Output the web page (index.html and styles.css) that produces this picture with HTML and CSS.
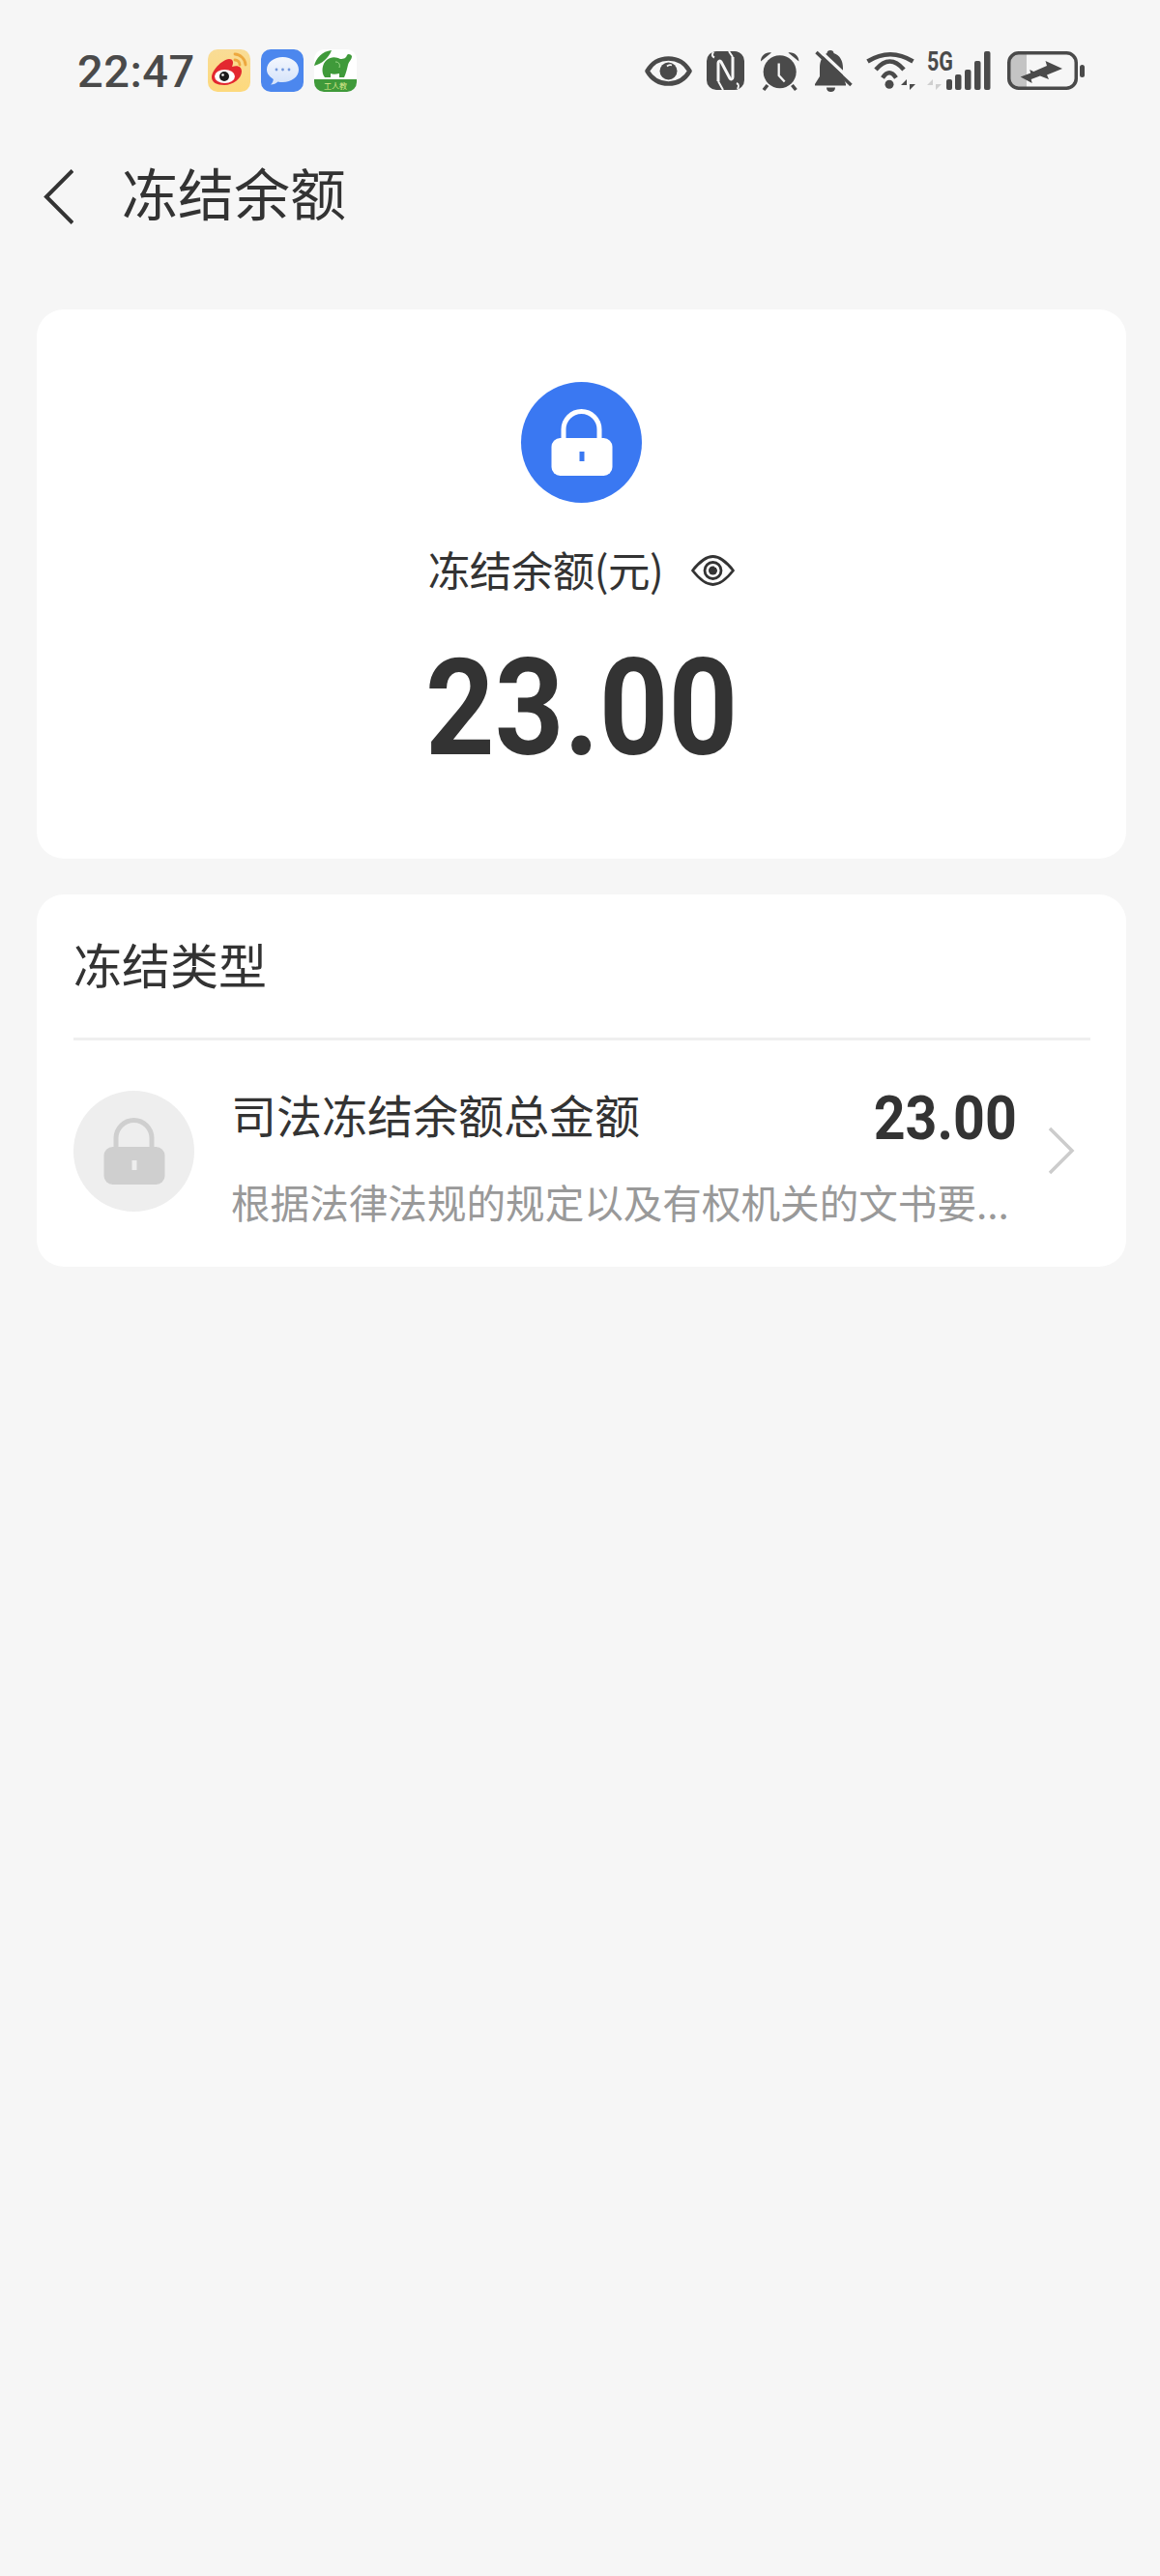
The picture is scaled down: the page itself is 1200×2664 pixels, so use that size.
FILE: index.html
```html
<!DOCTYPE html>
<html lang="zh-CN">
<head>
<meta charset="utf-8">
<title>冻结余额</title>
<link rel="stylesheet" href="styles.css">
</head>
<body>
<div class="status">
  <div class="status-left">
    <span class="time">22:47</span>
    <svg class="app" width="44" height="44" viewBox="0 0 44 44"><defs><linearGradient id="wb" x1="0" y1="0" x2="0" y2="1"><stop offset="0" stop-color="#f9dc96"/><stop offset="1" stop-color="#fdd97c"/></linearGradient></defs><rect width="44" height="44" rx="10" fill="url(#wb)"/><path d="M4 29c0-7 10-18 18-19 4 0 5 3 3 8 6-2 10 0 10 5 0 7-9 14-18 14-8 0-13-3-13-8z" fill="#e3282f"/><ellipse cx="17.500" cy="28" rx="10.500" ry="7" fill="#fff"/><circle cx="17" cy="28" r="5" fill="#1c1c1c"/><circle cx="15.500" cy="26.500" r="1.300" fill="#fff"/><path d="M28 5c5 0 11 5 11 11M28 11c2.500 0 5 2 5 5" stroke="#eda83e" stroke-width="2.800" fill="none" stroke-linecap="round"/></svg>
    <svg class="app" width="44" height="44" viewBox="0 0 44 44"><defs><linearGradient id="bub" x1="0" y1="0" x2="0" y2="1"><stop offset="0" stop-color="#f4f7fd"/><stop offset="1" stop-color="#d3e2fa"/></linearGradient></defs><rect width="44" height="44" rx="10" fill="#4c87ee"/><path d="M22.500 8c9 0 16.500 5.500 16.500 13s-7.500 13-16.500 13c-2 0-3.500-.2-5-.6-2 1.800-4.500 3-7.500 3.200 1.800-1.800 2.600-3.600 2.800-5.700C8.500 28 6 25 6 21 6 13.500 13.500 8 22.500 8z" fill="url(#bub)"/><circle cx="16" cy="21" r="1.400" fill="#7398dc"/><circle cx="22.500" cy="21" r="1.400" fill="#7398dc"/><circle cx="29" cy="21" r="1.400" fill="#7398dc"/></svg>
    <svg class="app" width="44" height="44" viewBox="0 0 44 44"><rect width="44" height="44" rx="10" fill="#fff"/><path d="M0 31h44v3a10 10 0 0 1-10 10H10A10 10 0 0 1 0 34z" fill="#3f9a3a"/><path d="M0 17C2 9 8 2 18 1c-3 8-10 14-18 16z" fill="#3f9a3a"/><path d="M11 29C7 24 8 15 13 11c5-4 10-3 14-1 4 0 6-1 7-4 1-2 4-1 5 1 0 4-3 5-4 9-1 4-2 9-4 13h-5v-4c-4 1-7 1-9 0v4z" fill="#3f9a3a"/><path d="M22 13c4 0 5 3 4 6" fill="none" stroke="#9fdc8c" stroke-width="1"/><text class="app-label" x="22" y="41" text-anchor="middle">工人教</text></svg>
  </div>
  <div class="status-right">
    <svg width="64" height="46" viewBox="0 0 64 46"><path d="M2.500 23.500C8 14 15 10.500 24.500 10.500S41 14 46.500 23.500C41 33 34 36.500 24.500 36.500S8 33 2.500 23.500z" fill="none" stroke="#4a4a4a" stroke-width="4.500" stroke-linejoin="round"/><circle cx="24.500" cy="23.500" r="9" fill="#4a4a4a"/><path d="M23 18.500a5 5 0 0 1 5-1" stroke="#f6f6f6" stroke-width="1.800" fill="none"/></svg>
    <svg width="55" height="46" viewBox="0 0 55 46"><rect y="3" width="39" height="40" rx="10" fill="#4a4a4a"/><path d="M12 34V15c0-2 2-2.500 3-1l9 17c1 1.500 3 1 3-1V9" stroke="#f6f6f6" stroke-width="3" fill="none"/><path d="M7 3.500c-2 4-1 5 1 6M32 42c2-4 1-5-1-6M12 34l5 9M27 9l-4-6" stroke="#f6f6f6" stroke-width="2" fill="none"/></svg>
    <svg width="56" height="46" viewBox="0 0 56 46"><circle cx="20.700" cy="24.300" r="17" fill="#4a4a4a"/><path d="M1 13.500C1 8 6 3.500 12 4.500zM40.400 13.500C40.400 8 35.400 3.500 29.400 4.500z" fill="#4a4a4a"/><path d="M8 38l-4 5M33.400 38l4 5" stroke="#4a4a4a" stroke-width="3.500"/><path d="M19.700 15.500V28l6 6.500" stroke="#f6f6f6" stroke-width="2.300" fill="none"/></svg>
    <svg width="53" height="46" viewBox="0 0 53 46"><path d="M17 2c2 0 3.500 1 3.500 3C27 7 30 13 30 20v9l3 8v1.500H1V37l5-8v-9C6 13 9 7 13.500 5c0-2 1.500-3 3.500-3zM13 40.500h9c0 3-2 4.500-4.500 4.500S13 43.500 13 40.500z" fill="#4a4a4a"/><path d="M5 1.500l36 34" stroke="#f6f6f6" stroke-width="3.500"/><path d="M2.500 4l36 34" stroke="#4a4a4a" stroke-width="3.500"/></svg>
    <svg width="63" height="46" viewBox="0 0 63 46"><path d="M2.500 13.500Q26-1 49.500 13.500M11 22Q25.500 5 40 22M18 30.500Q25 20 32 30.500" fill="none" stroke="#4a4a4a" stroke-width="4.500"/><circle cx="25" cy="37.300" r="4.500" fill="#4a4a4a"/><path d="M43 43V32l-6 6h6zM46 32v11l6-6h-6z" fill="#4a4a4a"/></svg>
    <svg class="signal" width="83" height="52" viewBox="0 -6 83 52"><text class="fiveg" x="1" y="23" textLength="27" lengthAdjust="spacingAndGlyphs">5G</text><path d="M7 43V32l-6 6h6zM10 32v11l6-6h-6z" fill="#cfcfcf"/><rect x="21" y="32" width="6" height="11" rx="2" fill="#4a4a4a"/><rect x="30" y="27" width="6.500" height="16" rx="2" fill="#4a4a4a"/><rect x="40" y="22" width="6.500" height="21" rx="2" fill="#4a4a4a"/><rect x="50" y="13" width="6.500" height="30" rx="2" fill="#4a4a4a"/><rect x="60" y="3" width="6.500" height="40" rx="2" fill="#4a4a4a"/></svg>
    <svg width="82" height="46" viewBox="0 0 82 46"><path d="M4 14.500a9 9 0 0 1 9-9h8v35h-8a9 9 0 0 1-9-9z" fill="#c4c4c4"/><rect x="2.750" y="4.750" width="69.500" height="36.500" rx="10" fill="none" stroke="#4a4a4a" stroke-width="3.500"/><rect x="76" y="17" width="5" height="13" rx="2.500" fill="#4a4a4a"/><path d="M26 25l16-7-1.500-5L58 21l-16 6.500 2 4.500zM14.700 29.500l10.500-4-1-3.500 12 6-10.500 4 1 4z" fill="#4a4a4a"/></svg>
  </div>
</div>

<header class="nav">
  <svg class="back" width="34" height="58" viewBox="0 0 34 58"><path d="M33 1.500L6 28.500l27 27" fill="none" stroke="#333" stroke-width="4"/></svg>
  <h1 class="nav-title">冻结余额</h1>
</header>

<main class="cards">
  <section class="card summary">
    <div class="lock-disc lock-blue">
      <svg width="64" height="69" viewBox="0 0 64 69"><path d="M13 32V21a18.500 18.500 0 0 1 37 0v11" fill="none" stroke="#fff" stroke-width="5"/><rect x="0.500" y="30" width="63" height="39" rx="9" fill="#fff"/><rect x="29.500" y="44" width="5" height="10" fill="#3a78f2"/></svg>
    </div>
    <div class="summary-label">
      <span>冻结余额(元)</span>
      <svg class="label-eye" width="45" height="36" viewBox="0 0 45 36"><path d="M1.500 18C7 11 14 3.500 22.500 3.500S38 11 43.500 18C38 25 31 32.500 22.500 32.500S7 25 1.500 18z" fill="none" stroke="#333" stroke-width="2.800" stroke-linejoin="round"/><circle cx="22.500" cy="18" r="8.500" fill="none" stroke="#333" stroke-width="2.800"/><circle cx="22.500" cy="18" r="4.500" fill="#333"/><path d="M24 13.500a5 5 0 0 1 4 4" stroke="#fff" stroke-width="1.500" fill="none"/></svg>
    </div>
    <div class="summary-amount">23.00</div>
  </section>

  <section class="card types">
    <h2 class="types-title">冻结类型</h2>
    <div class="row">
      <div class="lock-disc lock-grey">
        <svg width="64" height="69" viewBox="0 0 64 69"><path d="M13 32V21a18.500 18.500 0 0 1 37 0v11" fill="none" stroke="#cfcfcf" stroke-width="5"/><rect x="0.500" y="30" width="63" height="39" rx="9" fill="#cfcfcf"/><rect x="29.500" y="44" width="5" height="10" fill="#eee"/></svg>
      </div>
      <div class="row-body">
        <div class="row-top">
          <span class="row-name">司法冻结余额总金额</span>
          <span class="row-amount">23.00</span>
        </div>
        <div class="row-desc">根据法律法规的规定以及有权机关的文书要...</div>
      </div>
      <svg class="chev" width="28" height="50" viewBox="0 0 28 50"><path d="M2 2l23 23L2 48" fill="none" stroke="#cccccc" stroke-width="3.500"/></svg>
    </div>
  </section>
</main>
</body>
</html>
```

FILE: styles.css
```css
* { box-sizing: border-box; }
html, body { margin: 0; padding: 0; }
body {
  width: 1200px;
  height: 2664px;
  background: #f6f6f6;
  color: #333;
  font-family: "Noto Sans CJK SC", "Roboto", sans-serif;
  overflow: hidden;
}
.status {
  height: 146px;
  padding: 50px 77px 0 80px;
  display: flex;
  justify-content: space-between;
  align-items: flex-start;
}
.status-left { display: flex; align-items: center; gap: 11px; height: 46px; }
.time {
  font-family: "Roboto", sans-serif;
  font-weight: 500;
  font-size: 47px;
  letter-spacing: 0.5px;
  color: #4a4a4a;
  margin-right: 2px;
}
.app { display: block; }
.app-label { font-family: "Noto Sans CJK SC", sans-serif; font-size: 8px; fill: #dbe98c; }
.status-right { display: flex; align-items: flex-start; height: 46px; }
.status-right svg { display: block; flex: none; }
.status-right .signal { margin-top: -6px; }
.fiveg {
  font-family: "Roboto", sans-serif;
  font-weight: 700;
  font-size: 27px;
  fill: #4a4a4a;
}
.nav { height: 174px; padding: 0 0 68px 42px; display: flex; align-items: center; gap: 50px; }
.back { display: block; margin-top: 10px; }
.nav-title { margin: 0; font-size: 58px; font-weight: 400; line-height: 1.2; color: #333; }
.cards { padding: 0 35px 0 38px; display: flex; flex-direction: column; gap: 37px; }
.card { background: #fff; border-radius: 28px; }
.summary { height: 568px; padding-top: 75px; display: flex; flex-direction: column; align-items: center; }
.lock-disc { width: 125px; height: 125px; border-radius: 50%; display: flex; align-items: center; justify-content: center; flex: none; }
.lock-blue { background: #3a78f2; }
.lock-grey { background: #eeeeee; }
.summary-label { margin-top: 44px; display: flex; align-items: center; gap: 29px; font-size: 43.500px; letter-spacing: -0.5px; line-height: 50px; color: #333; }
.label-eye { margin-top: 2px; }
.summary-amount { margin-top: 44px; font-family: "Roboto", sans-serif; font-weight: 700; font-size: 139px; line-height: 150px; color: #333; transform: scaleX(0.9); }
.types { height: 385px; padding: 0 37px 0 38px; }
.types-title { margin: 0; height: 151px; border-bottom: 3px solid #efefef; font-size: 50px; font-weight: 400; line-height: 142px; color: #333; }
.row { display: flex; align-items: flex-start; padding-top: 52px; }
.row-body { width: 814px; margin-left: 38px; }
.row-top { display: flex; justify-content: space-between; align-items: center; height: 46px; margin-top: 1px; }
.row-name { font-size: 47px; line-height: 46px; color: #333; }
.row-amount { font-family: "Roboto", sans-serif; font-weight: 700; font-size: 63px; line-height: 46px; color: #333; margin-top: 9px; margin-right: 1px; transform: scaleX(0.91); transform-origin: right center; }
.row-desc { margin-top: 41px; font-size: 40.600px; line-height: 54px; color: #999; white-space: nowrap; }
.chev { margin-left: 31px; margin-top: 37px; flex: none; }
```
